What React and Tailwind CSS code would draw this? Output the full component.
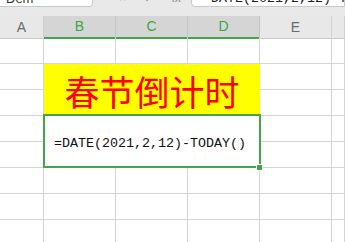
import React from "react";

const cols = ["A", "B", "C", "D", "E", ""];

function Cell() {
  return <div className="border-r border-b border-[#d4d4d4]" />;
}

export default function App() {
  return (
    <div className="w-[345px] h-[242px] overflow-hidden bg-white" style={{ fontFamily: '"Liberation Sans", Arial, sans-serif' }}>
      {/* toolbar */}
      <div className="h-[16px] bg-[#e9e9e9] overflow-hidden relative">
        <div className="flex items-start -mt-[12px] h-[19px]">
          <div className="w-[94px] h-[19px] bg-white border border-[#c9c9c9] rounded-br-[4px] pl-[6px] text-[13px] leading-[19px] text-[#333] overflow-hidden -ml-[1px]">
            Dem
          </div>
          <div className="w-[98px] h-[19px] flex items-center gap-[18px] pl-[26px] text-[12px] text-[#888]">
            <span>×</span>
            <span>✓</span>
            <span className="italic">fx</span>
          </div>
          <div className="flex-1 h-[19px] bg-white border border-[#c9c9c9] rounded-bl-[4px] pl-[11px] text-[13.33px] leading-[19px] text-[#222] whitespace-nowrap overflow-hidden" style={{ fontFamily: '"Liberation Mono", monospace' }}>
            =DATE(2021,2,12)-TODAY()
          </div>
        </div>
      </div>
      {/* header + grid */}
      <div className="relative">
        <div className="grid grid-cols-[44px_72px_72px_72px_72px_1fr] h-[21px]">
          {cols.map((c, i) => {
            const sel = i >= 1 && i <= 3;
            return (
              <div
                key={i}
                className={
                  "flex items-center justify-center text-[14px] border-r " +
                  (sel
                    ? "bg-[#d5d5d5] text-[#3ea53f] border-[#c4c4c4] border-b-2 border-b-[#44a546]"
                    : "bg-[#e8e8e8] text-[#6b6b6b] border-[#d0d0d0] border-b border-b-[#c8c8c8]")
                }
              >
                {c}
              </div>
            );
          })}
        </div>
        <div className="relative grid grid-cols-[44px_72px_72px_72px_72px_1fr] grid-rows-[27px_26px_26px_26px_26px_26px_26px_26px]">
          {/* row 1 */}
          <Cell /><Cell /><Cell /><Cell /><Cell /><Cell />
          {/* rows 2-3 */}
          <Cell />
          <div className="col-span-3 row-span-2 bg-[#ffff00] flex items-center justify-center text-[#ff0000] text-[35px] leading-none" style={{ fontFamily: '"Noto Sans CJK SC", sans-serif' }}>
            春节倒计时
          </div>
          <Cell /><Cell />
          <Cell /><Cell /><Cell />
          {/* rows 4-5 */}
          <Cell />
          <div className="col-span-3 row-span-2 border-r border-b border-[#d4d4d4] flex items-center pl-[10px] pt-[4px] text-[13.33px] text-[#111] whitespace-nowrap" style={{ fontFamily: '"Liberation Mono", monospace' }}>
            =DATE(2021,2,12)-TODAY()
          </div>
          <Cell /><Cell />
          <Cell /><Cell /><Cell />
          {/* rows 6-8 */}
          <Cell /><Cell /><Cell /><Cell /><Cell /><Cell />
          <Cell /><Cell /><Cell /><Cell /><Cell /><Cell />
          <Cell /><Cell /><Cell /><Cell /><Cell /><Cell />
          {/* selection overlay */}
          <div className="absolute left-[43px] top-[77px] w-[218px] h-[54px] border-2 border-[#44a546] pointer-events-none" />
          <div className="absolute left-[256px] top-[127px] w-[7px] h-[7px] bg-[#44a546] border border-white" />
        </div>
      </div>
    </div>
  );
}
